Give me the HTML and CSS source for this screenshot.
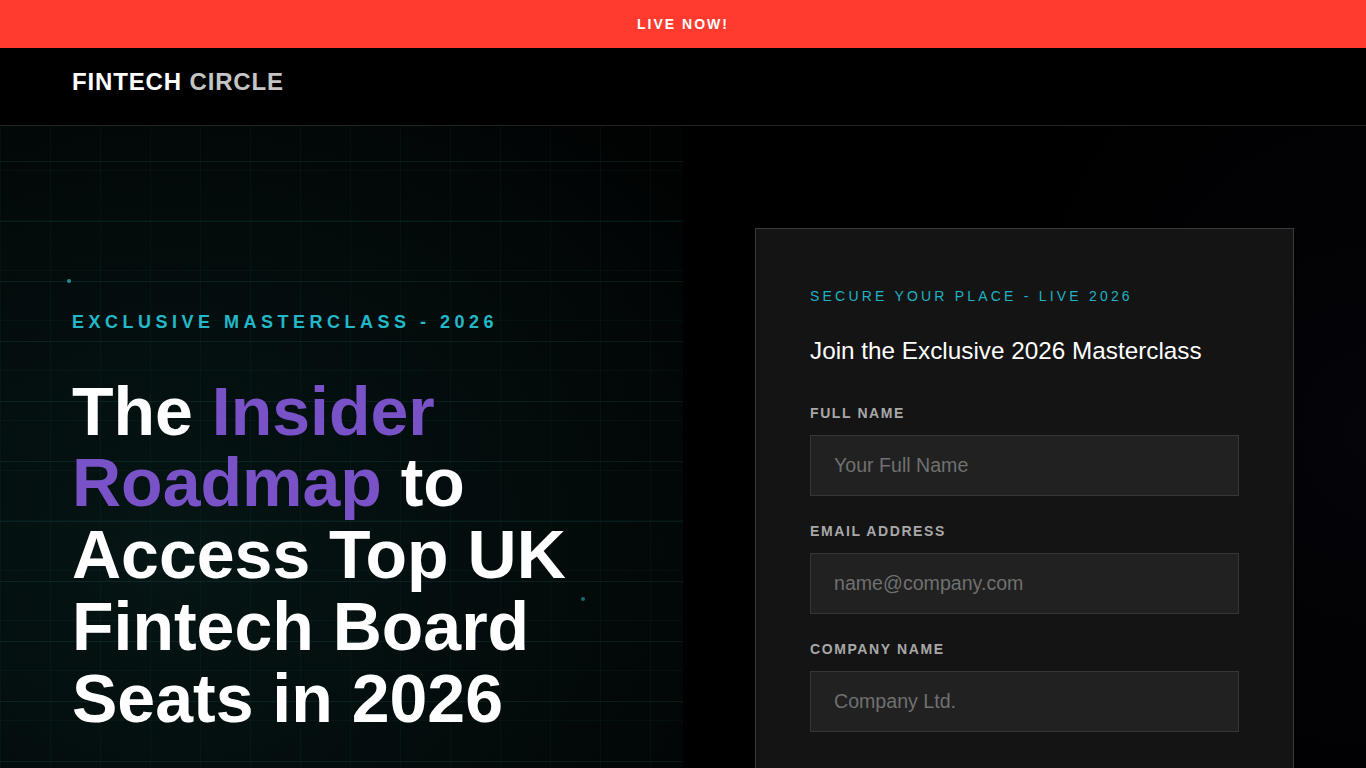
FILE: index.html
```html
<!DOCTYPE html>
<html lang="en">
<head>
    <meta charset="UTF-8">
    <meta name="viewport" content="width=device-width, initial-scale=1.0">
    <title>Fintech Circle - 2026 Masterclass</title>
    <link rel="stylesheet" href="styles.css">
</head>
<body>

    <div class="live-bar">LIVE NOW!</div>

    <header class="site-header">
        <div class="logo">FINTECH <span>CIRCLE</span></div>
    </header>

    <main class="hero">
        <!-- Left side: headline over the grid -->
        <section class="hero-copy">
            <span class="dot dot-one"></span>
            <span class="dot dot-two"></span>
            <p class="eyebrow">EXCLUSIVE MASTERCLASS - 2026</p>
            <h1 class="headline">The <span class="accent">Insider Roadmap</span> to Access Top UK Fintech Board Seats in 2026</h1>
        </section>

        <!-- Right side: signup form -->
        <section class="hero-form">
            <form class="signup-card" id="signupForm">
                <p class="card-eyebrow">SECURE YOUR PLACE - LIVE 2026</p>
                <h2 class="card-title">Join the Exclusive 2026 Masterclass</h2>

                <div class="field">
                    <label for="fullName">FULL NAME</label>
                    <input type="text" id="fullName" placeholder="Your Full Name">
                </div>
                <div class="field">
                    <label for="email">EMAIL ADDRESS</label>
                    <input type="email" id="email" placeholder="name@company.com">
                </div>
                <div class="field">
                    <label for="company">COMPANY NAME</label>
                    <input type="text" id="company" placeholder="Company Ltd.">
                </div>

                <button type="submit" class="submit-btn">RESERVE MY SEAT</button>
            </form>
        </section>
    </main>

</body>
</html>
```

FILE: styles.css
```css
* {
    box-sizing: border-box;
}

body {
    margin: 0;
    background-color: #000;
    color: #fff;
    font-family: "Liberation Sans", Arial, sans-serif;
    overflow-x: hidden;
}

/* Red strip on top */
.live-bar {
    height: 48px;
    line-height: 48px;
    background-color: #ff3b30;
    text-align: center;
    font-size: 14px;
    font-weight: bold;
    letter-spacing: 2px;
}

.site-header {
    height: 78px;
    padding: 20px 72px 0;
    border-bottom: 1px solid #222;
    background-color: #000;
}

.logo {
    font-size: 24px;
    font-weight: bold;
    letter-spacing: 0.85px;
    color: #fff;
}

.logo span {
    color: #c4c4c4;
}

.hero {
    display: grid;
    grid-template-columns: 683px 1fr;
    background: radial-gradient(ellipse 400px 500px at 100% 40%, #040409 0%, #000 100%);
}

/* Left column with the faint grid */
.hero-copy {
    position: relative;
    padding: 186px 72px 80px;
    background:
        linear-gradient(to bottom, rgba(40, 170, 170, 0.12) 1px, transparent 1px) 0 35px / 100% 60px,
        linear-gradient(to bottom, rgba(40, 170, 170, 0.05) 1px, transparent 1px) 0 44px / 100% 50px,
        linear-gradient(to right, rgba(40, 170, 170, 0.05) 1px, transparent 1px) 0 0 / 50px 100%,
        radial-gradient(ellipse 700px 600px at 25% 55%, #061515 0%, #030a0a 60%, #010202 100%);
}

.dot {
    position: absolute;
    width: 4px;
    height: 4px;
    border-radius: 50%;
    background-color: #1a8f99;
}

.dot-one { left: 67px; top: 153px; }
.dot-two { left: 581px; top: 471px; background-color: #136b73; }

.eyebrow {
    margin: 0;
    font-size: 18px;
    line-height: 20px;
    font-weight: bold;
    letter-spacing: 4.5px;
    color: #22b8c8;
}

.headline {
    margin: 43.6px 0 0;
    font-size: 68px;
    line-height: 1.055;
    font-weight: bold;
    color: #fff;
}

.headline .accent {
    color: #7a52c7;
}

/* Right column */
.hero-form {
    padding-top: 102px;
}

.signup-card {
    width: 539px;
    margin: 0 auto;
    padding: 59px 54px 54px;
    background-color: #141414;
    border: 1px solid #3a3a3a;
}

.card-eyebrow {
    margin: 0;
    font-size: 14px;
    line-height: 16px;
    letter-spacing: 3.2px;
    color: #1fb3c3;
}

.card-title {
    margin: 33px 0 40px;
    font-size: 24.3px;
    line-height: 28px;
    font-weight: normal;
    color: #fff;
}

.field {
    margin-bottom: 27px;
}

.field label {
    display: block;
    margin-bottom: 14px;
    font-size: 14px;
    line-height: 16px;
    font-weight: bold;
    letter-spacing: 1.6px;
    color: #a8a8a8;
}

.field input {
    display: block;
    width: 100%;
    height: 61px;
    padding: 0 23px;
    background-color: #212121;
    border: 1px solid #363636;
    border-radius: 0;
    color: #fff;
    font-family: "Liberation Sans", Arial, sans-serif;
    font-size: 19.6px;
    outline: none;
}

.field input::placeholder {
    color: #707070;
}

.submit-btn {
    width: 100%;
    height: 60px;
    margin-top: 22px;
    background-color: #7a52c7;
    color: #fff;
    border: none;
    font-family: "Liberation Sans", Arial, sans-serif;
    font-size: 16px;
    font-weight: bold;
    letter-spacing: 2px;
    cursor: pointer;
}
```
